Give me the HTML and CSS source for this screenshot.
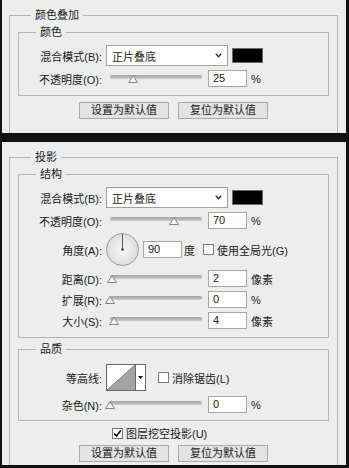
FILE: index.html
```html
<!DOCTYPE html>
<html lang="zh-CN">
<head>
    <meta charset="UTF-8">
    <meta name="viewport" content="width=device-width, initial-scale=1.0">
    <title>图层样式</title>
    <link rel="stylesheet" href="styles.css">
</head>
<body>
    <div class="frame">
        <div class="panel panel-top">
            <fieldset class="group">
                <legend>颜色叠加</legend>
                <fieldset class="sub">
                    <legend>颜色</legend>
                    <div class="rows">
                        <div class="row">
                            <span class="lbl">混合模式(B):</span>
                            <div class="select">正片叠底
                                <svg width="7" height="5" viewBox="0 0 7 5"><polyline points="0.8,0.8 3.5,3.8 6.2,0.8" fill="none" stroke="#333" stroke-width="1.3"/></svg>
                            </div>
                            <div class="swatch"></div>
                        </div>
                        <div class="row">
                            <span class="lbl">不透明度(O):</span>
                            <div class="track">
                                <svg class="thumb" style="left: 25%" width="10" height="8" viewBox="0 0 10 8"><polygon points="5,0.5 9.5,7.5 0.5,7.5" fill="#f3f3f3" stroke="#858585"/></svg>
                            </div>
                            <div class="num">25</div>
                            <span class="unit">%</span>
                        </div>
                    </div>
                </fieldset>
                <div class="buttons">
                    <button class="btn">设置为默认值</button>
                    <button class="btn">复位为默认值</button>
                </div>
            </fieldset>
        </div>

        <div class="panel panel-bottom">
            <fieldset class="group">
                <legend>投影</legend>
                <fieldset class="sub">
                    <legend>结构</legend>
                    <div class="rows">
                        <div class="row">
                            <span class="lbl">混合模式(B):</span>
                            <div class="select">正片叠底
                                <svg width="7" height="5" viewBox="0 0 7 5"><polyline points="0.8,0.8 3.5,3.8 6.2,0.8" fill="none" stroke="#333" stroke-width="1.3"/></svg>
                            </div>
                            <div class="swatch"></div>
                        </div>
                        <div class="row">
                            <span class="lbl">不透明度(O):</span>
                            <div class="track">
                                <svg class="thumb" style="left: 70%" width="10" height="8" viewBox="0 0 10 8"><polygon points="5,0.5 9.5,7.5 0.5,7.5" fill="#f3f3f3" stroke="#858585"/></svg>
                            </div>
                            <div class="num">70</div>
                            <span class="unit">%</span>
                        </div>
                        <div class="row">
                            <span class="lbl">角度(A):</span>
                            <svg class="dial" width="33" height="33" viewBox="0 0 33 33">
                                <defs>
                                    <radialGradient id="dialFill" cx="50%" cy="50%" r="50%">
                                        <stop offset="0%" stop-color="#fafafa"/>
                                        <stop offset="100%" stop-color="#dcdcdc"/>
                                    </radialGradient>
                                </defs>
                                <circle cx="16.5" cy="16.5" r="16" fill="url(#dialFill)" stroke="#9a9a9a"/>
                                <line x1="16.5" y1="1" x2="16.5" y2="16.5" stroke="#5a5a5a"/>
                                <circle cx="16.5" cy="16.5" r="1.3" fill="#333"/>
                            </svg>
                            <div class="num num-angle">90</div>
                            <span class="unit unit-deg">度</span>
                            <span class="box"></span>
                            <span class="boxtext">使用全局光(G)</span>
                        </div>
                        <div class="row">
                            <span class="lbl">距离(D):</span>
                            <div class="track">
                                <svg class="thumb" style="left: 2%" width="10" height="8" viewBox="0 0 10 8"><polygon points="5,0.5 9.5,7.5 0.5,7.5" fill="#f3f3f3" stroke="#858585"/></svg>
                            </div>
                            <div class="num">2</div>
                            <span class="unit">像素</span>
                        </div>
                        <div class="row">
                            <span class="lbl">扩展(R):</span>
                            <div class="track">
                                <svg class="thumb" style="left: 0%" width="10" height="8" viewBox="0 0 10 8"><polygon points="5,0.5 9.5,7.5 0.5,7.5" fill="#f3f3f3" stroke="#858585"/></svg>
                            </div>
                            <div class="num">0</div>
                            <span class="unit">%</span>
                        </div>
                        <div class="row">
                            <span class="lbl">大小(S):</span>
                            <div class="track">
                                <svg class="thumb" style="left: 4%" width="10" height="8" viewBox="0 0 10 8"><polygon points="5,0.5 9.5,7.5 0.5,7.5" fill="#f3f3f3" stroke="#858585"/></svg>
                            </div>
                            <div class="num">4</div>
                            <span class="unit">像素</span>
                        </div>
                    </div>
                </fieldset>

                <fieldset class="sub sub-quality">
                    <legend>品质</legend>
                    <div class="rows rows-quality">
                        <div class="row">
                            <span class="lbl">等高线:</span>
                            <div class="contour">
                                <svg width="28" height="25" viewBox="0 0 28 25"><polygon points="0,25 28,0 28,25" fill="#a3a3a3"/><line x1="0" y1="25" x2="28" y2="0" stroke="#7c7c7c"/></svg>
                                <div class="contour-arrow">
                                    <svg width="5" height="3" viewBox="0 0 5 3"><polygon points="0,0 5,0 2.5,3" fill="#111"/></svg>
                                </div>
                            </div>
                            <span class="box box-aa"></span>
                            <span class="boxtext">消除锯齿(L)</span>
                        </div>
                        <div class="row">
                            <span class="lbl">杂色(N):</span>
                            <div class="track">
                                <svg class="thumb" style="left: 0%" width="10" height="8" viewBox="0 0 10 8"><polygon points="5,0.5 9.5,7.5 0.5,7.5" fill="#f3f3f3" stroke="#858585"/></svg>
                            </div>
                            <div class="num">0</div>
                            <span class="unit">%</span>
                        </div>
                    </div>
                </fieldset>

                <div class="checkrow">
                    <span class="box box-checked">
                        <svg width="9" height="9" viewBox="0 0 9 9"><polyline points="1.2,4.6 3.5,7 7.8,1.6" fill="none" stroke="#111" stroke-width="1.6"/></svg>
                    </span>
                    <span class="boxtext">图层挖空投影(U)</span>
                </div>
                <div class="buttons buttons-bottom">
                    <button class="btn">设置为默认值</button>
                    <button class="btn">复位为默认值</button>
                </div>
            </fieldset>
        </div>
    </div>
</body>
</html>
```

FILE: styles.css
```css
* { box-sizing: border-box; }
body { margin: 0; background: #111; font: 11px "Liberation Sans", "Noto Sans CJK SC", sans-serif; color: #1a1a1a; }
.frame { width: 349px; height: 468px; padding: 0 3px 3px 2px; display: flex; flex-direction: column; gap: 9px; }
.panel { background: #ededed; overflow: hidden; flex: none; }
.panel-top { height: 133px; }
.panel-bottom { height: 323px; }

fieldset { margin: 0; padding: 0; border: 1px solid #b4b4b4; min-width: 0; }
legend { padding: 0 4px; line-height: 14px; }
.group { margin: 8px 8px 0 7px; padding-bottom: 40px; }
.group > legend { margin-left: 21px; }
.sub { margin: 3px 8px 0; padding: 6px 0 8px; }
.sub > legend { margin-left: 17px; }
.sub-quality { margin-top: 4px; padding: 8px 0 7px; }

.rows { display: flex; flex-direction: column; gap: 4px; }
.rows-quality { gap: 5px; }
.row { display: flex; align-items: center; }
.lbl { width: 83px; margin-right: 4px; text-align: right; flex: none; white-space: nowrap; }

.select { width: 122px; height: 21px; background: #fff; border: 1px solid #a2a2a2; display: flex; align-items: center; justify-content: space-between; padding: 0 5px 0 5px; }
.swatch { width: 31px; height: 15px; background: #000; border: 1px solid #6a6a6a; margin-left: 4px; }

.track { position: relative; width: 92px; height: 17px; margin-left: 4px; flex: none; }
.track::before { content: ""; position: absolute; left: 0; right: 0; top: 5px; height: 4px; border-radius: 2px; background: linear-gradient(#a2a2a2, #cbcbcb); }
.thumb { position: absolute; top: 5px; margin-left: -5px; }

.num { width: 39px; height: 17px; margin-left: 6px; background: #fff; border: 1px solid #a8a8a8; padding-left: 4px; line-height: 15px; flex: none; }
.num-angle { margin-left: 4px; }
.unit { margin-left: 4px; }
.unit-deg { margin-left: 2px; }

.dial { flex: none; }
.box { width: 11px; height: 11px; background: #fff; border: 1px solid #7c7c7c; margin-left: 8px; display: flex; align-items: center; justify-content: center; flex: none; }
.box-aa { margin-left: 12px; }
.boxtext { margin-left: 3px; white-space: nowrap; }

.contour { width: 40px; height: 27px; display: flex; border: 1px solid #666; background: #fff; flex: none; }
.contour-arrow { width: 10px; border-left: 1px solid #666; display: flex; align-items: center; justify-content: center; }

.checkrow { display: flex; align-items: center; height: 14px; margin: 5px 0 0 102px; }
.checkrow .box { margin-left: 0; }

.buttons { display: flex; justify-content: center; gap: 9px; margin-top: 6px; }
.buttons-bottom { margin-top: 5px; }
.btn { width: 90px; height: 17px; background: #e3e3e3; border: 1px solid #a9a9a9; font: inherit; color: inherit; padding: 0; line-height: 15px; }
```
